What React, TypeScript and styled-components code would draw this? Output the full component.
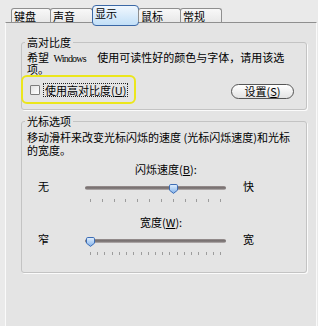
import * as React from 'react';
import styled, { createGlobalStyle } from 'styled-components';

const GlobalStyle = createGlobalStyle`
  html, body {
    margin: 0;
    padding: 0;
    background: #eaeaea;
  }
  body {
    font-family: "Noto Sans CJK SC", "Noto Sans", sans-serif;
    font-size: 11px;
    color: #000;
  }
`;

const Dialog = styled.div`
  width: 318px;
  height: 326px;
  overflow: hidden;
  padding-top: 5px;
  box-sizing: border-box;
  background: #eaeaea;
`;

const TabStrip = styled.div`
  position: relative;
  z-index: 1;
  display: flex;
  align-items: flex-end;
  height: 17px;
  padding-left: 11px;
`;

const Tab = styled.div<{ $active?: boolean; $width: number }>`
  width: ${p => p.$width}px;
  height: ${p => (p.$active ? 21 : 14)}px;
  box-sizing: border-box;
  margin-left: -1px;
  margin-bottom: ${p => (p.$active ? -4 : 0)}px;
  padding: 2px 0 0 2px;
  line-height: 11px;
  white-space: nowrap;
  border: 1px solid ${p => (p.$active ? '#3b68a6' : '#8f8f8f')};
  border-bottom: ${p => (p.$active ? '1px solid #3b68a6' : 'none')};
  border-radius: ${p => (p.$active ? '4px' : '3px 3px 0 0')};
  background: ${p =>
    p.$active
      ? 'linear-gradient(#f0f7fe, #c2dff7)'
      : 'linear-gradient(#f8f8f8, #e8e8e8)'};

  &:first-child {
    margin-left: 0;
  }
`;

const Panel = styled.div`
  margin-left: 5px;
  width: 312px;
  height: 320px;
  box-sizing: border-box;
  padding: 0 9px 0 15px;
  border-top: 1px solid #8f8f8f;
  border-left: 1px solid #fafafa;
  border-right: 1px solid #fafafa;
  background: #e4e4e4;
`;

const Group = styled.fieldset`
  margin: 6px 0 0;
  padding: 4px 12px 5px 5px;
  min-width: 0;
  border: 1px solid #c3c3c3;
  border-radius: 3px;
  box-shadow: 1px 1px 0 #fbfbfb;

  &:first-child {
    margin-top: 14px;
  }
`;

const Legend = styled.legend`
  margin-left: -2px;
  padding: 0 2px;
  line-height: 11px;
`;

const Note = styled.p<{ $lh: number }>`
  margin: 0;
  line-height: ${p => p.$lh}px;
  white-space: nowrap;
`;

const Latin = styled.span`
  font-family: "Liberation Serif", serif;
  font-size: 10px;
  letter-spacing: -0.8px;
  margin: 0 9px 0 2px;
`;

const ContrastRow = styled.div`
  display: flex;
  align-items: flex-start;
  justify-content: space-between;
  height: 29px;
`;

const Highlight = styled.div`
  display: flex;
  align-items: center;
  width: 115px;
  height: 29px;
  box-sizing: border-box;
  margin-left: -6px;
  padding-left: 7px;
  border: 2px solid #ebe61c;
  border-radius: 6px;
`;

const CheckBox = styled.span`
  flex: none;
  width: 10px;
  height: 10px;
  box-sizing: border-box;
  border: 1px solid #7c7c7c;
  border-radius: 1px;
  background: linear-gradient(135deg, #e2e2e2, #ffffff);
`;

const FocusLabel = styled.span`
  margin-left: 3px;
  padding: 0 1px;
  line-height: 12px;
  border: 1px dotted #222;
`;

const Button = styled.button`
  margin-top: 9px;
  width: 63px;
  height: 15px;
  padding: 0;
  border: 1px solid #555;
  border-radius: 8px;
  background: linear-gradient(#ffffff, #e3e3e3);
  font: inherit;
  line-height: 13px;
  color: #000;
`;

const SliderBlock = styled.div<{ $gap: number }>`
  margin-top: ${p => p.$gap}px;

  &:last-child {
    margin-bottom: 12px;
  }
`;

const Caption = styled.div<{ $indent: number }>`
  padding-left: ${p => p.$indent}px;
  line-height: 13px;
`;

const SliderRow = styled.div`
  display: flex;
  align-items: flex-start;
  margin-top: 4px;
`;

const EndLabel = styled.span<{ $gap: number; $width: number }>`
  margin-left: ${p => p.$gap}px;
  width: ${p => p.$width}px;
  line-height: 12px;
`;

const Track = styled.div`
  width: 141px;
`;

const RailArea = styled.div`
  position: relative;
  height: 16px;
  padding-top: 6px;
  box-sizing: border-box;
`;

const Rail = styled.div`
  height: 4px;
  border-radius: 2px;
  background: linear-gradient(#9d9494, #6e6767 50%, #bcb6b6);
`;

const Thumb = styled.svg`
  position: absolute;
  top: 4px;
`;

const Ticks = styled.div`
  display: flex;
  justify-content: space-between;
  margin: 3px 5px 0;
`;

const Tick = styled.span`
  width: 1px;
  height: 3px;
  background: #9c9c9c;
`;

type SliderProps = {
  caption: React.ReactNode;
  indent: number;
  gap: number;
  min: string;
  max: string;
  ticks: number;
  value: number;
};

const Slider = ({ caption, indent, gap, min, max, ticks, value }: SliderProps) => {
  const step = 131 / (ticks - 1);
  const left = 5 + value * step - 4.5;
  return (
    <SliderBlock $gap={gap}>
      <Caption $indent={indent}>{caption}</Caption>
      <SliderRow>
        <EndLabel $gap={11} $width={47}>{min}</EndLabel>
        <Track>
          <RailArea>
            <Rail />
            <Thumb width="9" height="10" viewBox="0 0 9 10" style={{ left }}>
              <defs>
                <linearGradient id="thumbFill" x1="0" y1="0" x2="0" y2="1">
                  <stop offset="0" stopColor="#e3f0fd" />
                  <stop offset="1" stopColor="#7fb0ea" />
                </linearGradient>
              </defs>
              <path
                d="M1.8 0.5H7.2Q8.5 0.5 8.5 1.8V6.2L4.5 9.4L0.5 6.2V1.8Q0.5 0.5 1.8 0.5Z"
                fill="url(#thumbFill)"
                stroke="#3d6db5"
              />
            </Thumb>
          </RailArea>
          <Ticks>
            {Array.from({ length: ticks }, (_, i) => (
              <Tick key={i} />
            ))}
          </Ticks>
        </Track>
        <EndLabel $gap={17} $width={11}>{max}</EndLabel>
      </SliderRow>
    </SliderBlock>
  );
};

const tabs = ['键盘', '声音', '显示', '鼠标', '常规'];
const widths = [40, 43, 47, 43, 42];

const App = () => (
  <React.Fragment>
    <GlobalStyle />
    <Dialog>
      <TabStrip>
        {tabs.map((t, i) => (
          <Tab key={t} $width={widths[i]} $active={i === 2}>
            {t}
          </Tab>
        ))}
      </TabStrip>
      <Panel>
        <Group>
          <Legend>高对比度</Legend>
          <Note $lh={11}>
            希望 <Latin>Windows</Latin> 使用可读性好的颜色与字体，请用该选
            <br />
            项。
          </Note>
          <ContrastRow>
            <Highlight>
              <CheckBox />
              <FocusLabel>
                使用高对比度(<u>U</u>)
              </FocusLabel>
            </Highlight>
            <Button>
              设置(<u>S</u>)
            </Button>
          </ContrastRow>
        </Group>
        <Group>
          <Legend>光标选项</Legend>
          <Note $lh={13}>
            移动滑杆来改变光标闪烁的速度 (光标闪烁速度)和光标
            <br />
            的宽度。
          </Note>
          <Slider
            caption={<>闪烁速度(<u>B</u>):</>}
            indent={108}
            gap={6}
            min="无"
            max="快"
            ticks={12}
            value={7}
          />
          <Slider
            caption={<>宽度(<u>W</u>):</>}
            indent={113}
            gap={14}
            min="窄"
            max="宽"
            ticks={19}
            value={0}
          />
        </Group>
      </Panel>
    </Dialog>
  </React.Fragment>
);

export default App;
